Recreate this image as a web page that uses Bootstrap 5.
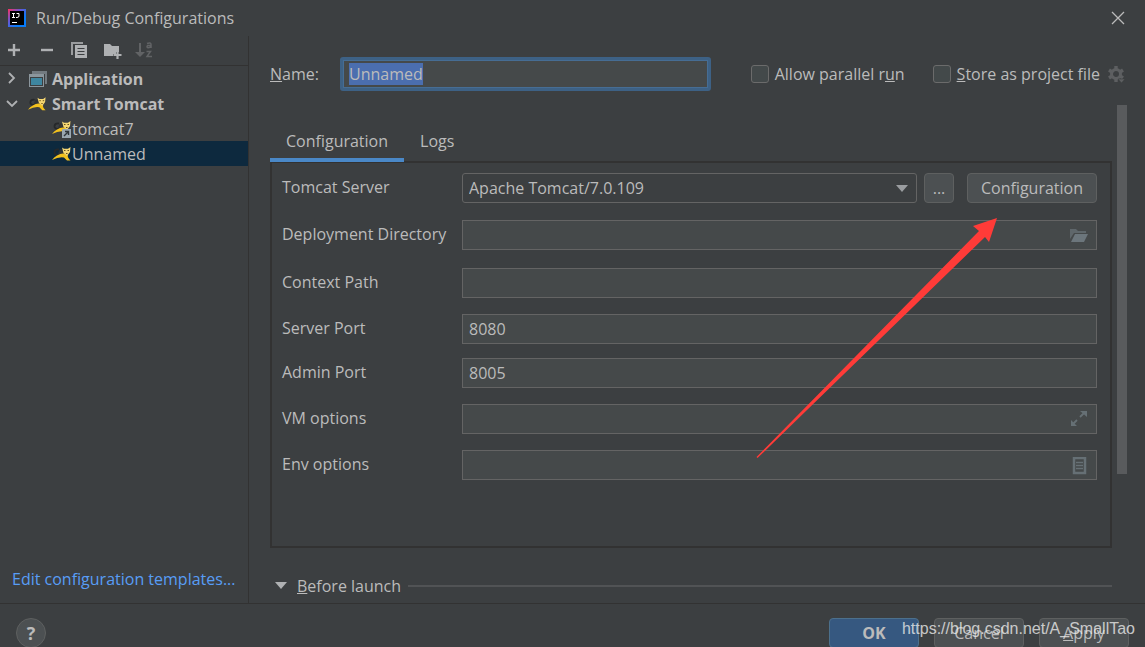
<!DOCTYPE html>
<html lang="en">
<head>
<meta charset="utf-8">
<meta name="viewport" content="width=device-width, initial-scale=1">
<title>Run/Debug Configurations</title>
<link href="https://cdn.jsdelivr.net/npm/bootstrap@5.3.0/dist/css/bootstrap.min.css" rel="stylesheet">
<style>
  :root { --bg: #3c3f41; --field: #45494a; --line: #646464; --edge: #323232; --ink: #bbbbbb; }
  body { background: var(--bg); color: var(--ink); font: 16px/24px "Open Sans", "Noto Sans", sans-serif; height: 100vh; overflow: hidden; }
  svg { display: block; flex: none; }
  button { font: inherit; }
  .titlebar { height: 36px; padding: 0 20px 0 8px; gap: 10px; }
  .plain { background: none; border: 0; padding: 0; color: inherit; }
  .body-row { min-height: 0; }
  .sidebar { width: 249px; border-right: 1px solid var(--edge); }
  .tools { height: 30px; padding: 0 6px 2px; border-bottom: 1px solid var(--edge); }
  .tools .plain { width: 16px; height: 16px; }
  .tree li { height: 25px; gap: 5px; padding-left: 5px; }
  .tree .leaf { padding-left: 52px; gap: 0; }
  .tree .chosen { background: #0d293e; }
  .templates { color: #589df6; padding: 0 12px 12px; }
  .main-pane { padding-left: 21px; min-width: 0; }
  .name-row { padding: 21px 20px 14px 0; }
  .name-row .caption { width: 70px; }
  .field { background: var(--field); border: 1px solid var(--line); color: var(--ink); height: 30px; padding: 0 6px 1px; width: 100%; border-radius: 0; outline: 0; }
  .name-field { border: 3px solid #3d6185; border-radius: 3px; height: 34px; box-shadow: inset 0 0 0 1px #466d94; margin-right: 40px; }
  .name-field::selection { background: #4b6eaf; color: var(--ink); }
  .check { appearance: none; width: 18px; height: 18px; margin: 0; background: #43494a; border: 1px solid #6b6b6b; border-radius: 3px; }
  .check + label { margin-left: 6px; white-space: nowrap; }
  .store { margin-left: 28px; }
  .tabs { padding-top: 24px; margin-bottom: -1px; position: relative; z-index: 1; }
  .tabs .plain { padding: 0 16px 5px; border-bottom: 4px solid transparent; }
  .tabs .active { border-color: #4a88c7; }
  .panel { border: 2px solid var(--edge); padding: 10px 13px 66px 10px; }
  .form-grid { display: grid; grid-template-columns: 180px minmax(0, 1fr); grid-template-rows: 47px 48px 46px 44px 46px 46px 30px; align-items: start; }
  .form-grid label { line-height: 28px; }
  .combo { appearance: none; background: var(--bg); border-radius: 3px; }
  .over-right { position: absolute; right: 9px; top: 7px; }
  .push { background: #4c5052; border: 1px solid #5e6060; border-radius: 4px; color: var(--ink); height: 30px; padding: 0; }
  .push.wide { width: 130px; margin-left: 13px; }
  .push.dots { width: 30px; margin-left: 7px; }
  .pointer { position: absolute; right: 113px; top: 55px; pointer-events: none; }
  .launch { padding-top: 26px; }
  .rule { height: 2px; background: #515355; margin-left: 7px; }
  .thumb { width: 10px; height: 74%; margin: 0 18px 0 5px; background: #595b5d; }
  .bottom { height: 44px; border-top: 1px solid var(--edge); padding: 14px 16px 0; gap: 15px; }
  .bottom .push { width: 90px; }
  .bottom .primary { background: #365880; border-color: #4c708c; font-weight: 700; }
  .bottom .help { width: 30px; border-radius: 50%; font-weight: 700; font-size: 18px; line-height: 28px; }
  .credit { position: absolute; right: 10px; bottom: 6px; color: rgba(235,235,235,.8); font: 16px/24px "Liberation Sans", sans-serif; }
</style>
</head>
<body class="d-flex flex-column m-0">
<svg width="0" height="0" class="position-absolute" aria-hidden="true">
  <symbol id="cat" viewBox="0 0 20 16">
    <path d="M7 9Q2 9 2.500 6T7 3.500" fill="none" stroke="#26282a" stroke-width="1.800"/>
    <path d="M6 8L8 3L11 4L13 8Z" fill="#303233"/>
    <path d="M0 14Q2 11 5 9.500Q9 7 12 7.500L16 9.500Q15 11 18.500 14.500H15L12 11.500Q7 10.500 0 14Z" fill="#f3c11d"/>
    <path d="M10 1.500L12 2.800H16L18.500 1L18 6L15 10L11.500 7Z" fill="#f6d772"/>
    <path d="M12 4.500h1.500M15.500 4.500H17M14 7.500h1.500" stroke="#66511c"/>
  </symbol>
</svg>
<header class="titlebar d-flex align-items-center">
  <svg width="18" height="18" viewBox="0 0 18 18"><defs><linearGradient id="lg" x1="0" y1="0" x2="1" y2="1"><stop offset="0" stop-color="#fe315d"/><stop offset=".35" stop-color="#6b57d2"/><stop offset=".7" stop-color="#087cfa"/></linearGradient></defs><path fill="url(#lg)" d="M0 0h18v18H0z"/><path d="M2 2h14v14H2z"/><path d="M4 4.500h3M5.500 4v4.500M4 8.500h3M8.500 4.500H11V7Q11 8.500 9 8.500H8M4 13.500h5" stroke="#fff" fill="none"/></svg>
  <span>Run/Debug Configurations</span>
  <button class="plain ms-auto" aria-label="Close"><svg width="14" height="14" viewBox="0 0 14 14"><path d="M1 1l12 12M13 1L1 13" stroke="#bbb" stroke-width="1.300"/></svg></button>
</header>
<div class="body-row d-flex flex-grow-1">
  <aside class="sidebar d-flex flex-column flex-shrink-0">
    <div class="tools d-flex align-items-center gap-3">
      <button class="plain" aria-label="Add"><svg width="16" height="16" viewBox="0 0 16 16"><path d="M2 8h12M8 2v12" stroke="#afb1b3" stroke-width="2.400"/></svg></button>
      <button class="plain" aria-label="Remove"><svg width="18" height="16" viewBox="0 0 18 16"><path d="M3 8h12" stroke="#afb1b3" stroke-width="2.400"/></svg></button>
      <button class="plain" aria-label="Copy"><svg width="18" height="18" viewBox="0 0 18 18"><path d="M1 0h12v2H3v11H1z" fill="#9a9c9e"/><path d="M5 3h12v13H5z" fill="#afb1b3"/><path d="M7.500 6.500h7M7.500 9.500h7M7.500 12.500h7" stroke="#3c3f41"/></svg></button>
      <button class="plain" aria-label="New folder"><svg width="20" height="18" viewBox="0 0 20 18"><path d="M2 2h6l2 2h7v6h-3v2h-3v2H2z" fill="#afb1b3"/><path d="M15.500 9v8M11.500 13h8" stroke="#afb1b3" stroke-width="2.200"/></svg></button>
      <button class="plain" aria-label="Sort" disabled><svg width="20" height="18" viewBox="0 0 20 18"><path d="M6 1v10" stroke="#616365" stroke-width="2"/><path d="M1 10h10l-5 5z" fill="#616365"/><path d="M13 1.500q4-1.500 4 1V6M17 3.500q-4-.5-4 1.300t4 0M12.500 9.500h4L13 14.500h5" fill="none" stroke="#616365" stroke-width="1.500"/></svg></button>
    </div>
    <ul class="tree list-unstyled m-0">
      <li class="d-flex align-items-center fw-bold"><svg width="14" height="14" viewBox="0 0 14 14"><path d="M4 1l5 5-5 5" fill="none" stroke="#afb1b3" stroke-width="1.800"/></svg>
        <svg class="ms-1" width="19" height="18" viewBox="0 0 19 18"><path d="M4 1h15v13h-2V4H4z" fill="#727a80"/><path d="M1 4h15v13H1z" fill="#8b969d"/><path d="M2 7h13v9H2z" fill="#3c3f41"/><path d="M3 8h11v7H3z" fill="#3e86a0"/></svg>Application</li>
      <li class="d-flex align-items-center fw-bold"><svg width="14" height="14" viewBox="0 0 14 14"><path d="M2 4l5 5 5-5" fill="none" stroke="#afb1b3" stroke-width="1.800"/></svg>
        <svg class="ms-1" width="19" height="16"><use href="#cat"/></svg>Smart Tomcat</li>
      <li class="leaf d-flex align-items-center"><svg width="20" height="18" viewBox="0 0 20 18"><svg width="20" height="16"><use href="#cat"/></svg><path d="M10 9h9v9h-9z" fill="#9aa7b0"/><path d="M12 16l4-4M13 11.500h3.500V15" fill="none" stroke="#30363a" stroke-width="1.400"/></svg>tomcat7</li>
      <li class="leaf chosen d-flex align-items-center"><svg width="20" height="16"><use href="#cat"/></svg>Unnamed</li>
    </ul>
    <a href="#" class="templates text-decoration-none mt-auto text-nowrap">Edit configuration templates...</a>
  </aside>
  <main class="main-pane d-flex flex-column flex-grow-1">
    <div class="name-row d-flex align-items-center">
      <label for="name" class="caption"><u>N</u>ame:</label>
      <input id="name" class="field name-field flex-grow-1 w-auto" value="Unnamed">
      <input type="checkbox" class="check" id="par"><label for="par">Allow parallel r<u>u</u>n</label>
      <input type="checkbox" class="check store" id="store"><label for="store" class="me-2"><u>S</u>tore as project file</label>
      <button class="plain" aria-label="Storage settings" disabled><svg width="17" height="18" viewBox="0 0 17 18"><circle cx="8" cy="9" r="4.500" fill="none" stroke="#5d5f61" stroke-width="3"/><path d="M8 1v3M8 14v3M1 5l3 2M12 11l3 2M1 13l3-2M12 7l3-2" stroke="#5d5f61" stroke-width="3.400"/><path d="M10 14h7l-3.500 4z" fill="#5d5f61" stroke="#3c3f41" stroke-width=".6"/></svg></button>
    </div>
    <div class="body-row d-flex flex-grow-1">
      <div class="flex-grow-1">
        <div class="tabs d-flex"><button class="plain active">Configuration</button><button class="plain">Logs</button></div>
        <section class="panel position-relative">
          <div class="form-grid">
            <label for="server">Tomcat Server</label>
            <div class="d-flex">
              <div class="position-relative flex-grow-1"><select id="server" class="field combo d-block"><option>Apache Tomcat/7.0.109</option></select><svg class="over-right" width="12" height="16" viewBox="0 0 12 16"><path d="M0 5h12L6 12z" fill="#9a9da0"/></svg></div>
              <button class="push dots">...</button><button class="push wide">Configuration</button>
            </div>
            <label for="dir">Deployment Directory</label>
            <div class="position-relative"><input id="dir" class="field d-block"><svg class="over-right" width="18" height="16" viewBox="0 0 18 16"><path d="M0 2h6l2 2h8v2H4L0 12z" fill="#5f676b"/><path d="M5 7h13l-4 8H1z" fill="#6c767c"/></svg></div>
            <label for="ctx">Context Path</label><input id="ctx" class="field">
            <label for="port">Server Port</label><input id="port" class="field" value="8080">
            <label for="admin">Admin Port</label><input id="admin" class="field" value="8005">
            <label for="vm">VM options</label>
            <div class="position-relative"><input id="vm" class="field d-block"><svg class="over-right" width="18" height="16" viewBox="0 0 18 16"><path d="M10 0h7v6zM1 9v6h6z" fill="#667075"/><path d="M10 6l4-4M3 13l4-4" stroke="#667075" stroke-width="1.800"/></svg></div>
            <label for="env">Env options</label>
            <div class="position-relative"><input id="env" class="field d-block"><svg class="over-right" width="18" height="18" viewBox="0 0 18 18"><path d="M4 1h11v15H4z" fill="none" stroke="#667075" stroke-width="2.500"/><path d="M6 5.500h7M6 8.500h7M6 11.500h7" stroke="#667075" stroke-width="1.500"/></svg></div>
          </div>
          <svg class="pointer" width="241" height="240" viewBox="0 0 241 240"><path d="M241 0L217 8l6 5L.5 239l1 1L229 19l4 5z" fill="#ff3b38"/></svg>
        </section>
        <div class="launch d-flex align-items-center">
          <button class="plain d-flex align-items-center"><svg width="27" height="14" viewBox="0 0 27 14"><path d="M5 3h12l-6 7z" fill="#afb1b3"/></svg><span><u>B</u>efore launch</span></button><div class="rule flex-grow-1"></div>
        </div>
      </div>
      <div class="thumb"></div>
    </div>
  </main>
</div>
<footer class="bottom d-flex align-items-start position-relative flex-shrink-0">
  <button class="push help me-auto" aria-label="Help">?</button>
  <button class="push primary">OK</button><button class="push">Cancel</button><button class="push"><u>A</u>pply</button>
  <span class="credit">https://blog.csdn.net/A_SmallTao</span>
</footer>
<script src="https://cdn.jsdelivr.net/npm/bootstrap@5.3.0/dist/js/bootstrap.bundle.min.js"></script>
<script>
  const nameField = document.getElementById('name');
  nameField.focus();
  nameField.select();
</script>
</body>
</html>
